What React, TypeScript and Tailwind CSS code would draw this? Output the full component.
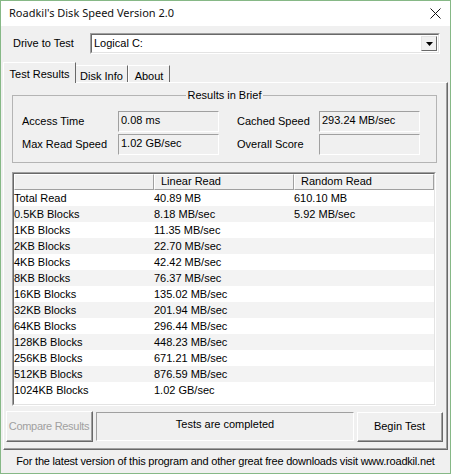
import React from 'react';

const rows: [string, string, string][] = [
  ['Total Read', '40.89 MB', '610.10 MB'],
  ['0.5KB Blocks', '8.18 MB/sec', '5.92 MB/sec'],
  ['1KB Blocks', '11.35 MB/sec', ''],
  ['2KB Blocks', '22.70 MB/sec', ''],
  ['4KB Blocks', '42.42 MB/sec', ''],
  ['8KB Blocks', '76.37 MB/sec', ''],
  ['16KB Blocks', '135.02 MB/sec', ''],
  ['32KB Blocks', '201.94 MB/sec', ''],
  ['64KB Blocks', '296.44 MB/sec', ''],
  ['128KB Blocks', '448.23 MB/sec', ''],
  ['256KB Blocks', '671.21 MB/sec', ''],
  ['512KB Blocks', '876.59 MB/sec', ''],
  ['1024KB Blocks', '1.02 GB/sec', ''],
];

// readonly value box in the brief group
const ValueBox = ({ value }: { value: string }) => (
  <div className="w-[101px] h-[21px] border-t border-l border-[#a0a0a0] border-b border-r border-b-white border-r-white pl-[2px] pt-[1px] leading-[14px]">
    {value}
  </div>
);

const Button = ({ label, disabled, className }: { label: string; disabled?: boolean; className?: string }) => (
  <div className={`border-t border-l border-white border-b border-r border-b-[#696969] border-r-[#696969] ${className}`}>
    <div
      className={`h-full w-full flex items-center justify-center whitespace-nowrap border-b border-r border-[#a0a0a0] ${
        disabled ? 'text-[#a0a0a0] tracking-[-0.3px]' : 'text-black'
      }`}
    >
      {label}
    </div>
  </div>
);

const App = () => {
  return (
    <div className="w-[451px] h-[474px] border border-[#86b886] bg-[#f0f0f0] flex flex-col text-[11px] text-black font-['Liberation_Sans',Arial,sans-serif] overflow-hidden">
      {/* Title bar */}
      <div className="h-[25px] shrink-0 bg-white flex items-center justify-between pl-[8px] pr-[9px]">
        <span className="text-[11px] font-['Noto_Sans',sans-serif] text-[#111]">Roadkil's Disk Speed Version 2.0</span>
        <svg width="11" height="11" viewBox="0 0 11 11">
          <path d="M0.5 0.5 L10.5 10.5 M10.5 0.5 L0.5 10.5" stroke="#111" strokeWidth="1" fill="none" />
        </svg>
      </div>

      {/* Drive selector */}
      <div className="mt-[7px] flex items-center h-[21px] pl-[12px]">
        <span className="w-[77px]">Drive to Test</span>
        <div className="w-[350px] h-[21px] border-t border-l border-[#a0a0a0] border-b border-r border-b-white border-r-white">
          <div className="h-full border-t border-l border-[#696969] border-b border-r border-b-[#e3e3e3] border-r-[#e3e3e3] bg-white flex items-center justify-between pl-[2px] pr-[1px]">
            <span>Logical C:</span>
            <div className="w-[16px] h-[15px] bg-[#f0f0f0] border-t border-l border-[#e3e3e3] border-b border-r border-b-[#696969] border-r-[#696969] flex items-center justify-center">
              <svg width="7" height="4" viewBox="0 0 7 4">
                <path d="M0 0 H7 L3.5 4 Z" fill="#000" />
              </svg>
            </div>
          </div>
        </div>
      </div>

      {/* Tabs */}
      <div className="mt-[8px] pl-[2px] h-[20px] flex items-end">
        <div className="relative z-10 h-[21px] -mb-px w-[73px] bg-[#f0f0f0] border-t border-l border-white border-r border-r-[#696969] flex items-start justify-center pt-[3px]">
          Test Results
        </div>
        <div className="h-[17px] w-[52px] border-t border-white border-r border-r-[#696969] flex items-start justify-center pt-[2px]">
          Disk Info
        </div>
        <div className="h-[17px] w-[42px] border-t border-l border-white border-r border-r-[#696969] flex items-start justify-center pt-[2px]">
          About
        </div>
      </div>

      {/* Tab panel */}
      <div className="ml-[2px] w-[445px] h-[368px] shrink-0 border-t border-l border-white border-b border-r border-b-[#696969] border-r-[#696969]">
        <div className="h-full border-b border-r border-[#a0a0a0] flex flex-col">
          {/* Results in Brief */}
          <div className="relative ml-[8px] mt-[12px] w-[425px] h-[68px] border border-[#b4b4b4] pl-[9px] pt-[15px]">
            <span className="absolute -top-[7px] left-1/2 -translate-x-1/2 bg-[#f0f0f0] px-[2px] leading-[13px]">
              Results in Brief
            </span>
            <div className="grid grid-cols-[96px_101px_18px_82px_101px] gap-y-[2px] items-center">
              <span>Access Time</span>
              <ValueBox value="0.08 ms" />
              <span />
              <span>Cached Speed</span>
              <ValueBox value="293.24 MB/sec" />
              <span>Max Read Speed</span>
              <ValueBox value="1.02 GB/sec" />
              <span />
              <span>Overall Score</span>
              <ValueBox value="" />
            </div>
          </div>

          {/* Results list */}
          <div className="ml-[8px] mt-[9px] w-[424px] h-[234px] border-t border-l border-[#a0a0a0] border-b border-r border-b-white border-r-white">
            <div className="h-full border-t border-l border-[#696969] border-b border-r border-b-[#e3e3e3] border-r-[#e3e3e3] bg-white">
              <div className="flex h-[16px] bg-[#f0f0f0]">
                {['', 'Linear Read', 'Random Read'].map((h, i) => (
                  <div
                    key={i}
                    className="w-[140px] h-full border-t border-l border-white border-b border-r border-b-[#a0a0a0] border-r-[#a0a0a0] pl-[6px] leading-[13px]"
                  >
                    {h}
                  </div>
                ))}
              </div>
              {rows.map((r, i) => (
                <div key={r[0]} className={`flex h-[16px] items-center ${i % 2 === 1 ? 'bg-[#f3f3f3]' : 'bg-white'}`}>
                  <span className="w-[140px]">{r[0]}</span>
                  <span className="w-[140px]">{r[1]}</span>
                  <span className="w-[140px]">{r[2]}</span>
                </div>
              ))}
            </div>
          </div>

          {/* Buttons */}
          <div className="mt-[5px] ml-[2px] flex items-start">
            <Button label="Compare Results" disabled className="w-[87px] h-[31px]" />
            <div className="ml-[3px] mt-[1px] w-[258px] h-[29px] border-t border-l border-[#a0a0a0] border-b border-r border-b-white border-r-white text-center pt-[3px]">
              Tests are completed
            </div>
            <Button label="Begin Test" className="ml-[3px] mt-[1px] w-[86px] h-[30px]" />
          </div>
        </div>
      </div>

      {/* Footer */}
      <div className="flex-1 flex items-center justify-center tracking-[-0.2px] whitespace-nowrap">
        For the latest version of this program and other great free downloads visit www.roadkil.net
      </div>
    </div>
  );
};

export default App;
